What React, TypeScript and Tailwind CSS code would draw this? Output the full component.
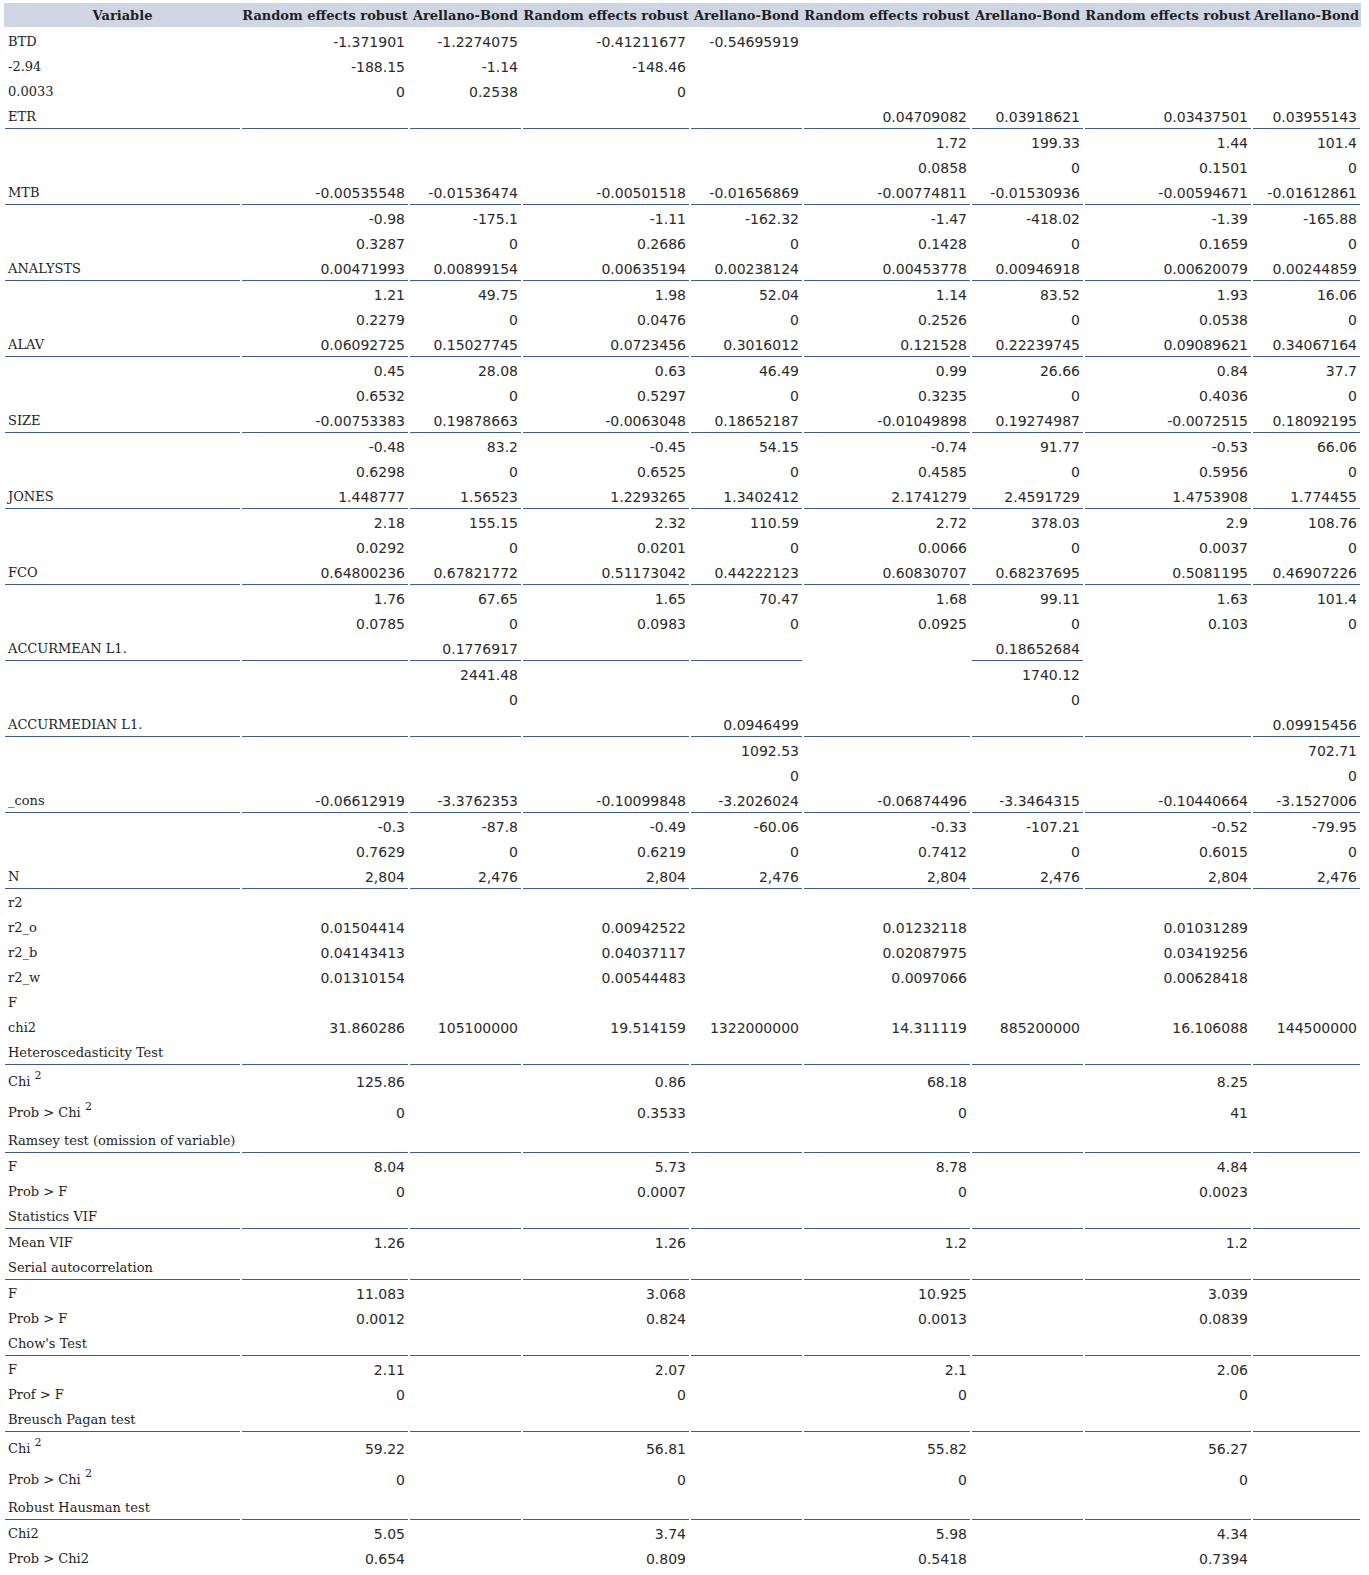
import React from "react";

type Row = {
  label: React.ReactNode;
  v: string[];
  line?: boolean[] | boolean;
  tall?: boolean;
};

const E = "";
const R = (label: React.ReactNode, v: string[], line?: boolean[] | boolean, tall?: boolean): Row => ({ label, v, line, tall });
const four = (a: string, b: string, c: string, d: string) => [a, E, b, E, c, E, d, E];

const ChiSq = ({ pre }: { pre: string }) => (
  <span>
    {pre}Chi <span className="relative -top-[7px] text-[11px]">2</span>
  </span>
);

const rows: Row[] = [
  R("BTD", ["-1.371901", "-1.2274075", "-0.41211677", "-0.54695919", E, E, E, E]),
  R("-2.94", ["-188.15", "-1.14", "-148.46", E, E, E, E, E]),
  R("0.0033", ["0", "0.2538", "0", E, E, E, E, E]),
  R("ETR", [E, E, E, E, "0.04709082", "0.03918621", "0.03437501", "0.03955143"], true),
  R("", [E, E, E, E, "1.72", "199.33", "1.44", "101.4"]),
  R("", [E, E, E, E, "0.0858", "0", "0.1501", "0"]),
  R("MTB", ["-0.00535548", "-0.01536474", "-0.00501518", "-0.01656869", "-0.00774811", "-0.01530936", "-0.00594671", "-0.01612861"], true),
  R("", ["-0.98", "-175.1", "-1.11", "-162.32", "-1.47", "-418.02", "-1.39", "-165.88"]),
  R("", ["0.3287", "0", "0.2686", "0", "0.1428", "0", "0.1659", "0"]),
  R("ANALYSTS", ["0.00471993", "0.00899154", "0.00635194", "0.00238124", "0.00453778", "0.00946918", "0.00620079", "0.00244859"], true),
  R("", ["1.21", "49.75", "1.98", "52.04", "1.14", "83.52", "1.93", "16.06"]),
  R("", ["0.2279", "0", "0.0476", "0", "0.2526", "0", "0.0538", "0"]),
  R("ALAV", ["0.06092725", "0.15027745", "0.0723456", "0.3016012", "0.121528", "0.22239745", "0.09089621", "0.34067164"], true),
  R("", ["0.45", "28.08", "0.63", "46.49", "0.99", "26.66", "0.84", "37.7"]),
  R("", ["0.6532", "0", "0.5297", "0", "0.3235", "0", "0.4036", "0"]),
  R("SIZE", ["-0.00753383", "0.19878663", "-0.0063048", "0.18652187", "-0.01049898", "0.19274987", "-0.0072515", "0.18092195"], true),
  R("", ["-0.48", "83.2", "-0.45", "54.15", "-0.74", "91.77", "-0.53", "66.06"]),
  R("", ["0.6298", "0", "0.6525", "0", "0.4585", "0", "0.5956", "0"]),
  R("JONES", ["1.448777", "1.56523", "1.2293265", "1.3402412", "2.1741279", "2.4591729", "1.4753908", "1.774455"], true),
  R("", ["2.18", "155.15", "2.32", "110.59", "2.72", "378.03", "2.9", "108.76"]),
  R("", ["0.0292", "0", "0.0201", "0", "0.0066", "0", "0.0037", "0"]),
  R("FCO", ["0.64800236", "0.67821772", "0.51173042", "0.44222123", "0.60830707", "0.68237695", "0.5081195", "0.46907226"], true),
  R("", ["1.76", "67.65", "1.65", "70.47", "1.68", "99.11", "1.63", "101.4"]),
  R("", ["0.0785", "0", "0.0983", "0", "0.0925", "0", "0.103", "0"]),
  R("ACCURMEAN L1.", [E, "0.1776917", E, E, E, "0.18652684", E, E], [true, true, true, true, true, false, true, false, false]),
  R("", [E, "2441.48", E, E, E, "1740.12", E, E]),
  R("", [E, "0", E, E, E, "0", E, E]),
  R("ACCURMEDIAN L1.", [E, E, E, "0.0946499", E, E, E, "0.09915456"], true),
  R("", [E, E, E, "1092.53", E, E, E, "702.71"]),
  R("", [E, E, E, "0", E, E, E, "0"]),
  R("_cons", ["-0.06612919", "-3.3762353", "-0.10099848", "-3.2026024", "-0.06874496", "-3.3464315", "-0.10440664", "-3.1527006"], true),
  R("", ["-0.3", "-87.8", "-0.49", "-60.06", "-0.33", "-107.21", "-0.52", "-79.95"]),
  R("", ["0.7629", "0", "0.6219", "0", "0.7412", "0", "0.6015", "0"]),
  R("N", ["2,804", "2,476", "2,804", "2,476", "2,804", "2,476", "2,804", "2,476"], true),
  R("r2", [E, E, E, E, E, E, E, E]),
  R("r2_o", four("0.01504414", "0.00942522", "0.01232118", "0.01031289")),
  R("r2_b", four("0.04143413", "0.04037117", "0.02087975", "0.03419256")),
  R("r2_w", four("0.01310154", "0.00544483", "0.0097066", "0.00628418")),
  R("F", [E, E, E, E, E, E, E, E]),
  R("chi2", ["31.860286", "105100000", "19.514159", "1322000000", "14.311119", "885200000", "16.106088", "144500000"]),
  R("Heteroscedasticity Test", [E, E, E, E, E, E, E, E], true),
  R(<ChiSq pre="" />, four("125.86", "0.86", "68.18", "8.25"), false, true),
  R(<ChiSq pre="Prob > " />, four("0", "0.3533", "0", "41"), false, true),
  R("Ramsey test (omission of variable)", [E, E, E, E, E, E, E, E], true),
  R("F", four("8.04", "5.73", "8.78", "4.84")),
  R("Prob > F", four("0", "0.0007", "0", "0.0023")),
  R("Statistics VIF", [E, E, E, E, E, E, E, E], true),
  R("Mean VIF", four("1.26", "1.26", "1.2", "1.2")),
  R("Serial autocorrelation", [E, E, E, E, E, E, E, E], true),
  R("F", four("11.083", "3.068", "10.925", "3.039")),
  R("Prob > F", four("0.0012", "0.824", "0.0013", "0.0839")),
  R("Chow's Test", [E, E, E, E, E, E, E, E], true),
  R("F", four("2.11", "2.07", "2.1", "2.06")),
  R("Prof > F", four("0", "0", "0", "0")),
  R("Breusch Pagan test", [E, E, E, E, E, E, E, E], true),
  R(<ChiSq pre="" />, four("59.22", "56.81", "55.82", "56.27"), false, true),
  R(<ChiSq pre="Prob > " />, four("0", "0", "0", "0"), false, true),
  R("Robust Hausman test", [E, E, E, E, E, E, E, E], true),
  R("Chi2", four("5.05", "3.74", "5.98", "4.34")),
  R("Prob > Chi2", four("0.654", "0.809", "0.5418", "0.7394")),
];

const widths = ["w-[237px]", "w-[168px]", "w-[113px]", "w-[168px]", "w-[113px]", "w-[168px]", "w-[113px]", "w-[168px]", "w-[109px]"];
const heads = ["Variable", "Random effects robust", "Arellano-Bond", "Random effects robust", "Arellano-Bond", "Random effects robust", "Arellano-Bond", "Random effects robust", "Arellano-Bond"];

export default function App() {
  return (
    <div className="bg-white min-h-[1575px] pt-[3px] pl-[4px] text-[#1e1e1e]">
      <table className="border-collapse table-fixed w-[1357px]">
        <colgroup>
          {widths.map((w, i) => (
            <col key={i} className={w} />
          ))}
        </colgroup>
        <thead>
          <tr className="bg-[#cfd6e3]">
            {heads.map((h, i) => (
              <th
                key={i}
                className="p-0 pt-[2px] h-[24px] text-center font-bold text-[13px] leading-[22px] whitespace-nowrap font-['DejaVu_Serif',serif]"
              >
                {h}
              </th>
            ))}
          </tr>
          <tr>
            <td colSpan={9} className="p-0 h-[3px]" />
          </tr>
        </thead>
        <tbody>
          {rows.map((r, ri) => {
            const lines = Array.isArray(r.line) ? r.line : Array(9).fill(!!r.line);
            const cells = [r.label, ...r.v];
            return (
              <tr key={ri}>
                {cells.map((c, ci) => {
                  const ln = lines[ci];
                  const h = r.tall ? "h-[31px] pt-[3px]" : ln ? "h-[26px]" : "h-[25px]";
                  return (
                    <td key={ci} className="p-0 align-top">
                      <div className={`mx-px ${h} flex flex-col`}>
                        <div
                          className={`h-[24px] leading-[24px] whitespace-nowrap ${
                            ln ? "border-b border-[#3d5b8d]" : ""
                          } ${
                            ci === 0
                              ? "pl-[3px] text-left text-[13px] font-['DejaVu_Serif',serif]"
                              : "pr-[3px] text-right text-[14px] font-['DejaVu_Sans',sans-serif] text-[#2a2a2a]"
                          }`}
                        >
                          {c}
                        </div>
                      </div>
                    </td>
                  );
                })}
              </tr>
            );
          })}
        </tbody>
      </table>
    </div>
  );
}
